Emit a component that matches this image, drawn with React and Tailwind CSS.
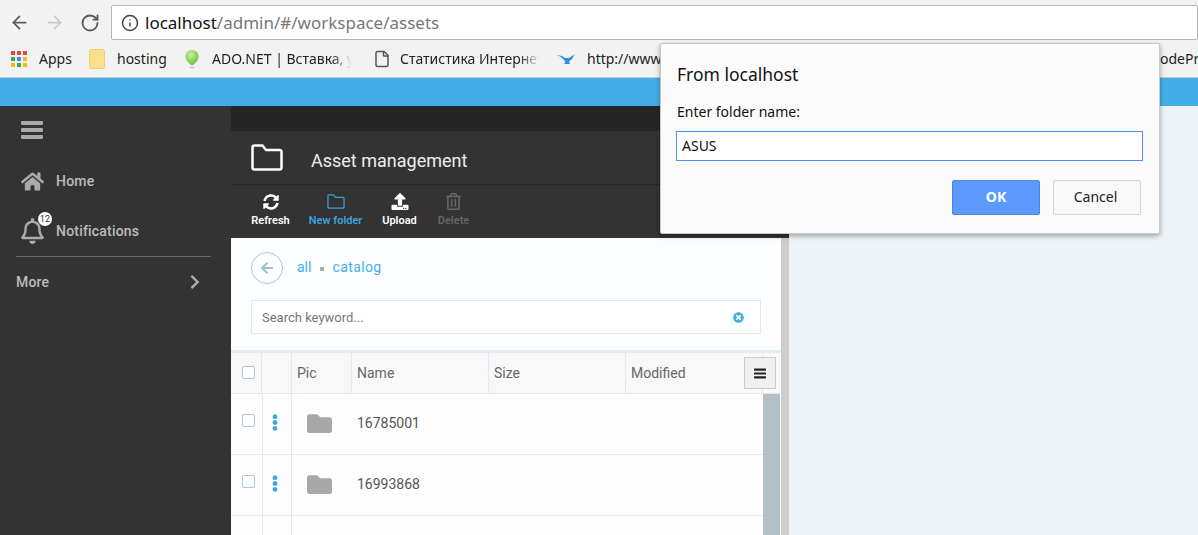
import React from 'react';
import { ArrowLeft, ArrowRight, RotateCw, Info, File } from 'lucide-react';
import { FaHome, FaRegBell, FaChevronRight, FaSyncAlt, FaUpload, FaRegTrashAlt, FaArrowLeft, FaTimesCircle, FaFolder, FaEllipsisV } from 'react-icons/fa';

const appColors = ['#e8453c', '#e8453c', '#e8453c', '#34a853', '#4285f4', '#fbbc05', '#fbbc05', '#34a853', '#fbbc05'];

function AppsIcon() {
    return (
        <div className="grid grid-cols-3 gap-[2px] w-[16px] h-[16px] shrink-0">
            {appColors.map((color, i) => (
                <svg key={i} viewBox="0 0 4 4" className="w-[4px] h-[4px]"><rect width="4" height="4" fill={color} /></svg>
            ))}
        </div>
    );
}

function Balloon() {
    return (
        <svg viewBox="0 0 16 20" className="w-[16px] h-[20px] shrink-0">
            <defs>
                <radialGradient id="balloon" cx="0.4" cy="0.3" r="0.8">
                    <stop offset="0" stopColor="#c8f29a" />
                    <stop offset="1" stopColor="#5cb82e" />
                </radialGradient>
            </defs>
            <path d="M8 1C3.8 1 1.5 4 1.5 7.5 1.5 11.500 5.500 15 8 16.500 10.500 15 14.500 11.500 14.500 7.500 14.500 4 12.200 1 8 1Z" fill="url(#balloon)" />
            <ellipse cx="8" cy="18.500" rx="3" ry="1" fill="#ccc" />
        </svg>
    );
}

function Lamp() {
    return (
        <svg viewBox="0 0 20 12" className="w-[20px] h-[12px] shrink-0">
            <path d="M0 2 5 3 8 5 12 5 15 3 19 1 17 2.500 15 6 12 8.500 13 11 7 11 8.500 8.500 6 6 4 4Z" fill="#2f8fd8" />
        </svg>
    );
}

function Bars({ className }) {
    return (
        <svg viewBox="0 0 22 18" className={className} fill="currentColor">
            <rect width="22" height="4" rx="1" />
            <rect y="7" width="22" height="4" rx="1" />
            <rect y="14" width="22" height="4" rx="1" />
        </svg>
    );
}

function FolderOutline({ className, strokeWidth }) {
    return (
        <svg viewBox="0 0 32 27" className={className} fill="none" stroke="currentColor" strokeWidth={strokeWidth} strokeLinejoin="round">
            <path d="M3.500 1.500H11.500L15 6H28.500C29.600 6 30.500 6.900 30.500 8V23.500C30.500 24.600 29.600 25.500 28.500 25.500H3.500C2.400 25.500 1.500 24.600 1.500 23.500V3.500C1.500 2.400 2.400 1.500 3.500 1.500Z" />
        </svg>
    );
}

function Bookmark({ width, icon, gap, fade, pad, children }) {
    return (
        <div className="flex items-center shrink-0 overflow-hidden" style={{ width, paddingRight: pad }}>
            {icon}
            <span
                className={`whitespace-nowrap min-w-0 overflow-hidden text-[14px] text-[#222] ${fade ? '[mask-image:linear-gradient(to_right,black_85%,transparent)]' : ''}`}
                style={{ marginLeft: gap }}
            >
                {children}
            </span>
        </div>
    );
}

function BrowserBar() {
    return (
        <div className="bg-[#f2f2f2] h-[78px] border-b border-[#c9c9c9] font-['Noto_Sans',sans-serif] overflow-hidden">
            <div className="flex items-center h-[40px] pt-[5px] pl-[9px]">
                <ArrowLeft size={21} strokeWidth={2} className="text-[#5a5a5a]" />
                <ArrowRight size={21} strokeWidth={2} className="text-[#c9c9c9] ml-[14px]" />
                <RotateCw size={20} strokeWidth={2.2} className="text-[#5a5a5a] ml-[15px]" />
                <div className="flex items-center ml-[11px] flex-1 h-[35px] bg-white border border-[#b5b5b5] rounded-[2px] pl-[9px]">
                    <Info size={18} strokeWidth={2} className="text-[#444]" />
                    <span className="ml-[6px] text-[17px] text-[#111]">localhost</span>
                    <span className="text-[17px] text-[#777]">/admin/#/workspace/assets</span>
                </div>
            </div>
            <div className="flex items-center h-[37px] pl-[11px]">
                <Bookmark width={78} icon={<AppsIcon />} gap={12}>Apps</Bookmark>
                <Bookmark width={95} gap={12} icon={<div className="w-[16px] h-[20px] bg-[#fbe08c] rounded-[2px] border border-[#f0cf70] shrink-0" />}>hosting</Bookmark>
                <Bookmark width={189} gap={12} fade pad={21} icon={<Balloon />}>ADO.NET | Вставка, у</Bookmark>
                <Bookmark width={184} gap={9} fade pad={17} icon={<File size={18} className="text-[#555] shrink-0" />}>Статистика Интернет</Bookmark>
                <Bookmark width={300} gap={10} icon={<Lamp />}>http://www</Bookmark>
                <div className="ml-auto whitespace-nowrap text-[14px] text-[#222] w-[38px] overflow-hidden">odePro</div>
            </div>
        </div>
    );
}

function Sidebar() {
    return (
        <aside className="w-[231px] shrink-0 bg-[#333] text-[#bbb] pl-[16px] pr-[20px] tracking-[0.2px]">
            <Bars className="mt-[15px] ml-[5px] text-[#aaa] w-[22px] h-[18px]" />
            <div className="flex items-center mt-[30px] ml-[5px] h-[24px]">
                <FaHome className="w-[23px] h-[23px] text-[#aaa]" />
                <span className="ml-[12px] text-[14px] font-medium">Home</span>
            </div>
            <div className="flex items-center mt-[26px] ml-[5px] h-[24px] relative">
                <FaRegBell className="w-[23px] h-[26px] text-[#aaa]" />
                <span className="ml-[12px] text-[14px] font-medium">Notifications</span>
                <span className="absolute left-[17px] -top-[7px] w-[14px] h-[14px] rounded-full bg-white text-[#333] text-[9px] leading-[14px] text-center">12</span>
            </div>
            <div className="mt-[13px] pt-[17px] border-t border-[#666] flex items-center justify-between pr-[11px] h-[34px]">
                <span className="text-[14px] font-medium">More</span>
                <FaChevronRight className="w-[10px] h-[16px] text-[#aaa]" />
            </div>
        </aside>
    );
}

function ToolButton({ icon, label, color, width }) {
    return (
        <div className={`flex flex-col items-center shrink-0 ${color}`} style={{ width }}>
            <div className="h-[20px] flex items-center">{icon}</div>
            <span className="text-[11px] font-semibold leading-[14px] mt-[2px] whitespace-nowrap">{label}</span>
        </div>
    );
}

function AssetHeader() {
    return (
        <>
            <div className="h-[25px] bg-[#262626]" />
            <div className="h-[54px] bg-[#333] flex items-center pl-[20px] border-b border-[#262626]">
                <FolderOutline className="w-[32px] h-[27px] text-white" strokeWidth={2.5} />
                <span className="ml-[28px] mt-[5px] text-[18px] text-[#eee]">Asset management</span>
            </div>
            <div className="h-[53px] bg-[#333] flex items-center pl-[20px] pb-[4px]">
                <ToolButton width={39} color="text-white" label="Refresh" icon={<FaSyncAlt className="w-[16px] h-[16px]" />} />
                <ToolButton width={53} color="text-[#3aa3db] ml-[19px]" label="New folder" icon={<FolderOutline className="w-[18px] h-[15px]" strokeWidth={2.2} />} />
                <ToolButton width={35} color="text-white ml-[20px]" label="Upload" icon={<FaUpload className="w-[18px] h-[17px]" />} />
                <ToolButton width={31} color="text-[#666] ml-[21px]" label="Delete" icon={<FaRegTrashAlt className="w-[15px] h-[17px]" />} />
            </div>
        </>
    );
}

function Breadcrumb() {
    return (
        <div className="flex items-center pt-[14px] pl-[20px] h-[46px]">
            <div className="w-[32px] h-[32px] rounded-full border border-[#a9c6da] flex items-center justify-center">
                <FaArrowLeft className="w-[14px] h-[14px] text-[#9dbfd6]" />
            </div>
            <span className="ml-[14px] -mt-[2px] text-[14px] text-[#45b0e6]">all</span>
            <span className="ml-[9px] mt-[2px] w-[4px] h-[4px] bg-[#aaa]" />
            <span className="ml-[8px] -mt-[2px] text-[14px] text-[#45b0e6] tracking-[0.4px]">catalog</span>
        </div>
    );
}

function SearchBox() {
    return (
        <div className="ml-[20px] mt-[16px] w-[510px] h-[34px] bg-white border border-[#dfe9f0] flex items-center pl-[10px] pr-[16px] justify-between">
            <span className="text-[13px] text-[#777] mt-[2px]">Search keyword...</span>
            <FaTimesCircle className="w-[11px] h-[11px] text-[#45b0e6]" />
        </div>
    );
}

function AssetRow({ name }) {
    return (
        <div className="flex h-[61px] border-b border-[#dfe9f0] bg-[#fdfdfd]">
            <div className="w-[31px] pl-[11px] pt-[20px]">
                <div className="w-[13px] h-[13px] border border-[#a9c6da] rounded-[2px] bg-white" />
            </div>
            <div className="w-[29px] border-l border-[#dfe9f0] flex justify-center pt-[20px] pr-[4px]">
                <FaEllipsisV className="w-[14px] h-[17px] text-[#3aa9e6]" />
            </div>
            <div className="w-[60px] border-l border-[#dfe9f0] flex pl-[14px] pt-[17px]">
                <FaFolder className="w-[27px] h-[25px] text-[#a8a8a8]" />
            </div>
            <div className="flex-1 pl-[6px] pt-[19px] text-[14px] text-[#555]">{name}</div>
        </div>
    );
}

function Th({ width, children }) {
    return (
        <div className="border-r border-[#dfe9f0] pl-[5px] flex items-center text-[14px] text-[#666]" style={{ width }}>
            {children}
        </div>
    );
}

function AssetTable() {
    return (
        <div className="mt-[16px] border-t-[3px] border-[#e0ebf2] relative">
            <div className="flex h-[41px] bg-[#f8f8f8] border-b border-[#dfe9f0] mr-[1px]">
                <div className="w-[31px] border-r border-[#dfe9f0] pl-[11px] flex items-center">
                    <div className="w-[13px] h-[13px] border border-[#a9c6da] rounded-[2px] bg-white -mt-[2px]" />
                </div>
                <Th width={30} />
                <Th width={60}>Pic</Th>
                <Th width={137}>Name</Th>
                <Th width={137}>Size</Th>
                <Th width={137}>Modified</Th>
                <div className="flex-1" />
            </div>
            <button className="absolute right-[5px] top-[4px] w-[32px] h-[32px] bg-[#f0f0f0] border border-[#ccc] flex items-center justify-center">
                <Bars className="w-[12px] h-[11px] text-[#222]" />
            </button>
            <div className="flex">
                <div className="flex-1">
                    <AssetRow name="16785001" />
                    <AssetRow name="16993868" />
                    <AssetRow name="" />
                </div>
                <div className="w-[17px] bg-[#b3c0c8] mr-[1px]" />
            </div>
        </div>
    );
}

function PromptDialog() {
    return (
        <div className="absolute left-[660px] top-[43px] w-[500px] h-[191px] bg-[#fbfbfb] border border-[#c8c8c8] rounded-[2px] shadow-[0_2px_5px_rgba(0,0,0,0.35)] font-['Noto_Sans',sans-serif] px-[16px]">
            <div className="mt-[18px] text-[17.5px] leading-[24px] text-[#111]">From localhost</div>
            <div className="mt-[16px] text-[14px] leading-[20px] text-[#111]">Enter folder name:</div>
            <div className="mt-[9px] -ml-[1px] w-[467px] h-[30px] bg-white border border-[#4d90fe] pl-[5px] pb-[2px] flex items-center text-[14px] text-[#111]">ASUS</div>
            <div className="flex mt-[19px] justify-end pr-[2px] gap-[13px]">
                <button className="w-[88px] h-[35px] bg-[#5b9aff] border border-[#4d84e0] rounded-[2px] text-white font-bold text-[14px] pb-[2px]">OK</button>
                <button className="w-[88px] h-[35px] bg-[#f8f8f8] border border-[#d4d4d4] rounded-[2px] text-[#222] text-[14px] pb-[2px] pr-[3px]">Cancel</button>
            </div>
        </div>
    );
}

export default function App() {
    return (
        <div className="relative h-[535px] w-[1198px] overflow-hidden bg-[#ecf4f7] font-['Roboto',sans-serif]">
            <BrowserBar />
            <div className="h-[28px] bg-[#42aee5]" />
            <div className="flex h-[429px]">
                <Sidebar />
                <main className="w-[550px] shrink-0 bg-[#fbfdff]">
                    <AssetHeader />
                    <Breadcrumb />
                    <SearchBox />
                    <AssetTable />
                </main>
                <div className="w-[8px] flex flex-col">
                    <div className="h-[132px] bg-[#333]" />
                    <div className="flex-1 bg-[#cccccc]" />
                </div>
            </div>
            <PromptDialog />
        </div>
    );
}
